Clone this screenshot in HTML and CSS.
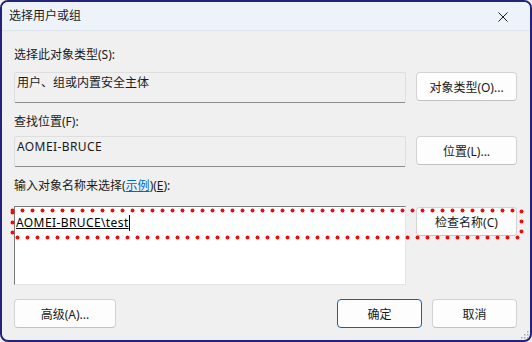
FILE: index.html
```html
<!DOCTYPE html>
<html lang="zh-CN">
<head>
  <meta charset="UTF-8" />
  <title>选择用户或组</title>
  <link rel="stylesheet" href="styles.css">
</head>
<body>
  <div class="window">
    <div class="titlebar">
      <span class="title">选择用户或组</span>
      <svg class="close" width="10" height="10" viewBox="0 0 10 10">
        <path d="M0.5 0.5 L9.5 9.5 M9.5 0.5 L0.5 9.5" stroke="#1a1a1a" stroke-width="1" fill="none" />
      </svg>
    </div>

    <div class="dialog">
      <div class="label label-first">选择此对象类型(S):</div>
      <div class="row">
        <div class="field">用户、组或内置安全主体</div>
        <button class="btn">对象类型(O)...</button>
      </div>

      <div class="label">查找位置(F):</div>
      <div class="row row-tight">
        <div class="field"><span class="latin">AOMEI-BRUCE</span></div>
        <button class="btn">位置(L)...</button>
      </div>

      <div class="label">输入对象名称来选择(<a class="link" href="#">示例</a>)(<u>E</u>):</div>
      <div class="row row-names">
        <div class="names"><span class="name latin">AOMEI-BRUCE\test</span><span class="caret"></span></div>
        <button class="btn btn-check">检查名称(C)</button>
        <!-- focus highlight -->
        <svg class="dots" width="514" height="32" viewBox="0 0 514 32">
          <rect x="2.5" y="2.5" width="509" height="27" fill="none" stroke="#e60f0f" stroke-width="4" stroke-dasharray="0 10" stroke-linecap="round" />
        </svg>
      </div>

      <div class="footer">
        <button class="btn btn-wide">高级(A)...</button>
        <div class="spacer"></div>
        <button class="btn btn-small btn-default">确定</button>
        <button class="btn btn-small">取消</button>
      </div>
    </div>

    <svg class="grip" width="9" height="9" viewBox="0 0 9 9">
      <rect x="7" y="1" width="1.5" height="1.5" fill="#a8a8a8" />
      <rect x="4" y="4" width="1.5" height="1.5" fill="#a8a8a8" />
      <rect x="7" y="4" width="1.5" height="1.5" fill="#a8a8a8" />
      <rect x="1" y="7" width="1.5" height="1.5" fill="#a8a8a8" />
      <rect x="4" y="7" width="1.5" height="1.5" fill="#a8a8a8" />
      <rect x="7" y="7" width="1.5" height="1.5" fill="#a8a8a8" />
    </svg>
  </div>
</body>
</html>
```

FILE: styles.css
```css
body {
  margin: 0;
  font-family: "Noto Sans", "Noto Sans CJK SC", sans-serif;
  font-size: 12px;
  color: #1a1a1a;
  background: #f0f0f0;
}

.window {
  position: relative;
  width: 532px;
  height: 342px;
  box-sizing: border-box;
  border: 2px solid #23237d;
  border-radius: 8px;
  background: #f0f0f0;
  overflow: hidden;
  display: flex;
  flex-direction: column;
}

.titlebar {
  height: 28px;
  display: flex;
  align-items: center;
  padding: 0 22px 0 7px;
  background: #eef3f9;
  border-bottom: 1px solid #dfe5ec;
}

.title {
  line-height: 16px;
}

.close {
  margin-left: auto;
  margin-top: 1px;
}

.dialog {
  padding: 0 13px 0 12px;
  display: flex;
  flex-direction: column;
}

.label {
  line-height: 16px;
  height: 16px;
  margin-top: 11px;
}

.label-first {
  margin-top: 16px;
}

.link {
  color: #0066cc;
  text-decoration: underline;
}

.latin {
  letter-spacing: 0.4px;
}

.row {
  display: flex;
  gap: 10px;
  margin-top: 9px;
  align-items: flex-start;
}

.row-tight {
  margin-top: 6px;
}

.row-names {
  position: relative;
  margin-top: 12px;
}

.field {
  width: 392px;
  height: 31px;
  box-sizing: border-box;
  padding: 2px 2px;
  line-height: 16px;
  background: #f0f0f0;
  border: 1px solid #dedede;
  border-bottom-color: #8c8c8c;
  border-radius: 2px;
}

.btn {
  width: 101px;
  height: 29px;
  padding: 0;
  font-family: inherit;
  font-size: 12px;
  color: #1a1a1a;
  background: #fdfdfd;
  border: 1px solid #d3d3d3;
  border-bottom-color: #c2c2c2;
  border-radius: 4px;
}

.names {
  width: 392px;
  height: 79px;
  box-sizing: border-box;
  padding: 8px 1px;
  line-height: 16px;
  background: #fff;
  border: 1px solid #e3e3e3;
  border-top-color: #7a7a7a;
  border-left-color: #7a7a7a;
  display: flex;
  align-items: flex-start;
}

.name {
  color: #000;
  text-decoration: underline;
}

.caret {
  display: inline-block;
  width: 1px;
  height: 16px;
  background: #000;
}

.btn-check {
  margin-top: 1px;
}

.dots {
  position: absolute;
  left: -4px;
  top: 2px;
  pointer-events: none;
}

.footer {
  display: flex;
  gap: 10px;
  margin-top: 14px;
}

.btn-wide {
  width: 102px;
}

.spacer {
  flex: 1;
}

.btn-small {
  width: 85px;
}

.btn-default {
  border: 1px solid #0067c0;
}

.grip {
  position: absolute;
  right: 1px;
  bottom: 1px;
}
```
